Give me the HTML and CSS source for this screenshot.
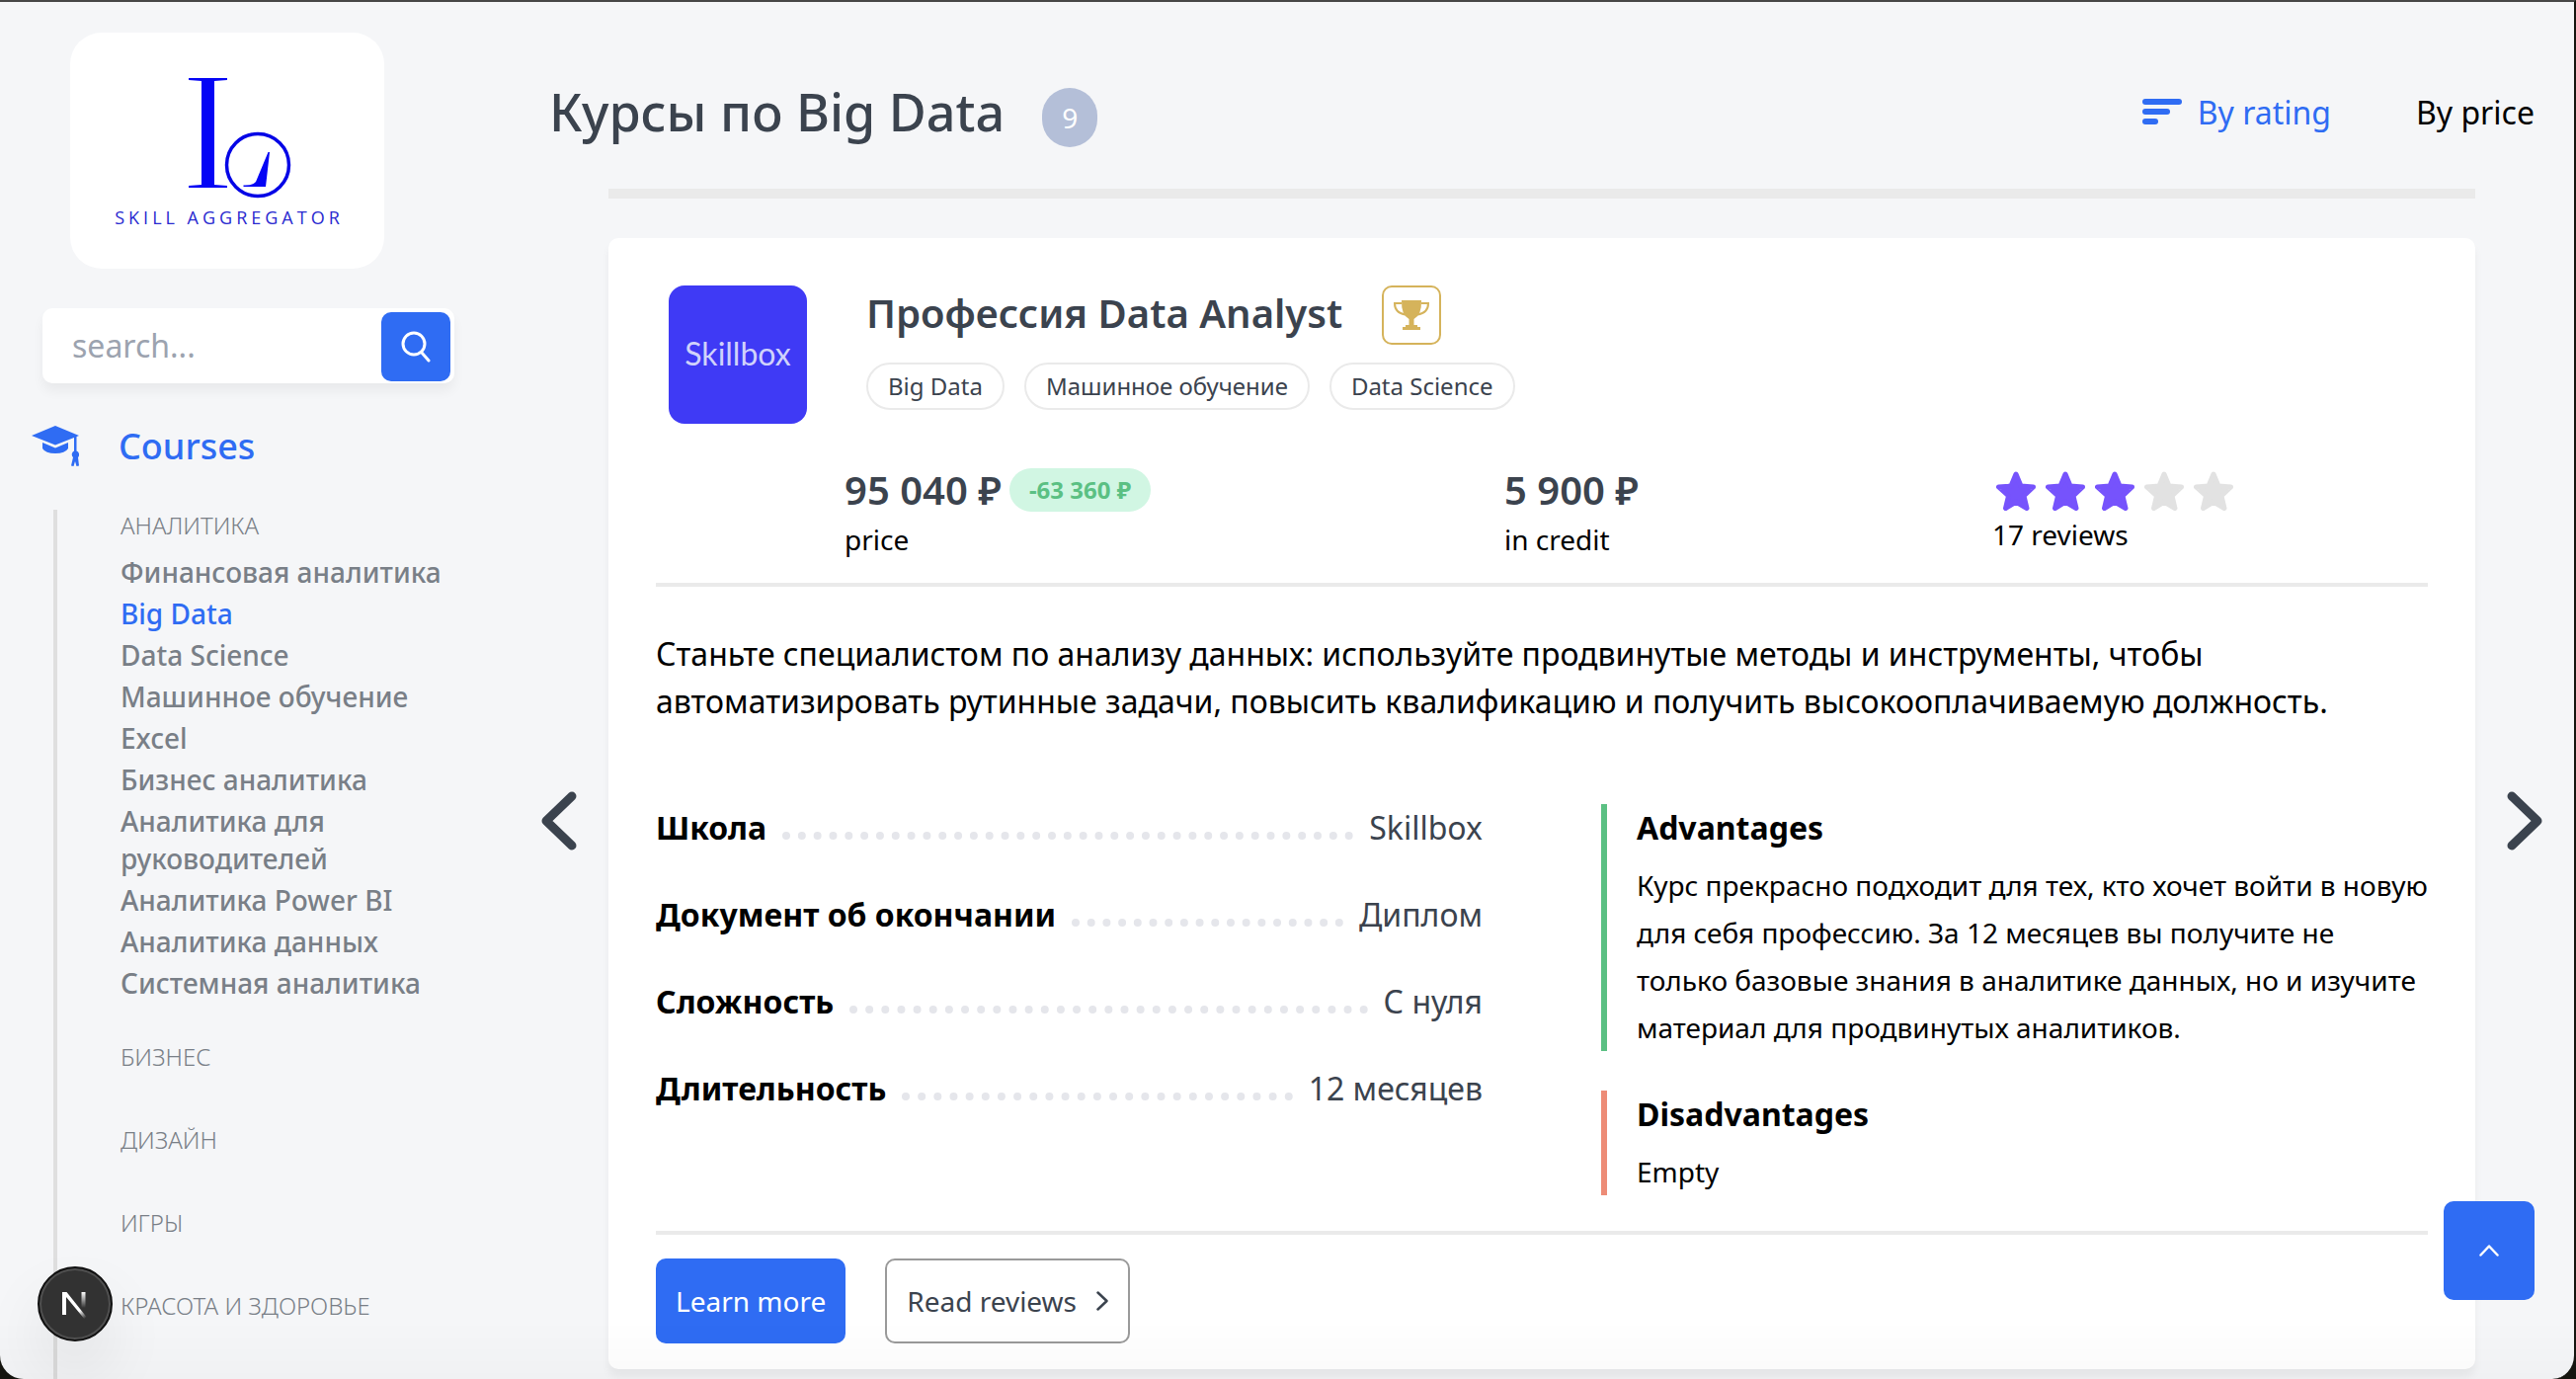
FILE: index.html
```html
<!DOCTYPE html>
<html lang="ru">
<head>
<meta charset="utf-8">
<meta name="viewport" content="width=device-width, initial-scale=1">
<title>Курсы по Big Data</title>
<link rel="stylesheet" href="styles.css">
</head>
<body>
<svg width="0" height="0" class="sprite" aria-hidden="true">
  <symbol id="star" viewBox="0 0 40 40">
    <path stroke-width="5" stroke-linejoin="round" d="M20 3L25 15L37.500 16L28 25L31 37.500L20 31L9.500 37.500L12.500 25L2.500 16L15 15Z"/>
  </symbol>
</svg>
<div class="layout">
  <aside class="sidebar">
    <a class="brand" href="#" aria-label="Skill Aggregator">
      <svg class="brand-mark" width="104" height="122" viewBox="0 0 104 122" aria-hidden="true">
        <path fill="#0505f5" d="M0 0H39V2L26 3V108L39 109V111H0V109L13 108V3L0 2Z"/>
        <circle cx="70" cy="88" r="31.500" fill="none" stroke="#0505e6" stroke-width="3.500"/>
        <path fill="#0505f5" d="M80.500 75H82L78 110H55.500V108.500Q65 109 68 105Z"/>
      </svg>
      <span class="brand-name">SKILL AGGREGATOR</span>
    </a>
    <form class="search">
      <input class="search-input" type="text" placeholder="search..." aria-label="search">
      <button class="search-button" type="button" aria-label="Find">
        <svg width="32" height="32" viewBox="0 0 32 32" fill="none" stroke="#fff" stroke-width="3" stroke-linecap="round" aria-hidden="true"><circle cx="14" cy="13" r="11"/><path d="M22 22l7 8"/></svg>
      </button>
    </form>
    <nav class="menu">
      <a class="menu-head" href="#">
        <svg width="48" height="42" viewBox="0 0 48 42" fill="#2f6cf3" aria-hidden="true">
          <path d="M24 0L48 10L24 19.500L0 10Z"/>
          <path d="M11 17L24 22.500L37 17V23Q34 28 24 28Q14 28 11 23Z"/>
          <path d="M43 11H45.500V25.500A4 4 0 0 1 47 32L48 40.500L45.500 41L44 36L42.500 41L40 40.500L42 32A4 4 0 0 1 43 25.500Z"/>
        </svg>
        <span>Courses</span>
      </a>
      <div class="menu-groups">
        <section class="group">
          <a class="group-title" href="#">АНАЛИТИКА</a>
          <ul class="pages">
            <li><a href="#">Финансовая аналитика</a></li>
            <li><a class="current" href="#">Big Data</a></li>
            <li><a href="#">Data Science</a></li>
            <li><a href="#">Машинное обучение</a></li>
            <li><a href="#">Excel</a></li>
            <li><a href="#">Бизнес аналитика</a></li>
            <li><a href="#">Аналитика для руководителей</a></li>
            <li><a href="#">Аналитика Power BI</a></li>
            <li><a href="#">Аналитика данных</a></li>
            <li><a href="#">Системная аналитика</a></li>
          </ul>
        </section>
        <section class="group"><a class="group-title" href="#">БИЗНЕС</a></section>
        <section class="group"><a class="group-title" href="#">ДИЗАЙН</a></section>
        <section class="group"><a class="group-title" href="#">ИГРЫ</a></section>
        <section class="group"><a class="group-title" href="#">КРАСОТА И ЗДОРОВЬЕ</a></section>
      </div>
    </nav>
  </aside>

  <main class="main">
    <header class="top">
      <h1 class="title">Курсы по Big Data</h1>
      <span class="count">9</span>
      <div class="sort">
        <button class="sort-option active" type="button">
          <svg width="40" height="26" viewBox="0 0 40 26" fill="currentColor" aria-hidden="true"><rect width="40" height="6" rx="3"/><rect y="10" width="28" height="6" rx="3"/><rect y="20" width="16" height="6" rx="3"/></svg>
          By rating
        </button>
        <button class="sort-option" type="button">By price</button>
      </div>
    </header>

    <div class="carousel">
      <button class="arrow" type="button" aria-label="Previous">
        <svg width="36" height="60" viewBox="0 0 36 60" fill="none" stroke="#3b434e" stroke-width="9" stroke-linecap="round" stroke-linejoin="round" aria-hidden="true"><path d="M31 5L5 30L31 55"/></svg>
      </button>
      <div class="slide">
        <div class="bar"></div>
        <article class="card">
          <div class="head">
            <div class="school">Skillbox</div>
            <div class="head-text">
              <div class="name-row">
                <h2 class="name">Профессия Data Analyst</h2>
                <span class="award">
                  <svg width="36" height="30" viewBox="0 0 36 30" fill="#d5b35b" aria-hidden="true">
                    <path d="M8 0H28Q28.500 15 20.500 19V25H24V27H27V30H9V27H12V25H15.500V19Q7.500 15 8 0Z"/>
                    <path fill="none" stroke="#d5b35b" stroke-width="2" d="M8 3H1Q1 13 12 14.500M28 3H35Q35 13 24 14.500"/>
                  </svg>
                </span>
              </div>
              <ul class="tags"><li>Big Data</li><li>Машинное обучение</li><li>Data Science</li></ul>
            </div>
          </div>
          <div class="stats">
            <div class="stat">
              <div class="amount">95 040 ₽ <span class="discount">-63 360 ₽</span></div>
              <div class="caption">price</div>
            </div>
            <div class="stat">
              <div class="amount">5 900 ₽</div>
              <div class="caption">in credit</div>
            </div>
            <div class="rating">
              <div class="stars" role="img" aria-label="3 / 5">
                <svg class="star on"><use href="#star"/></svg>
                <svg class="star on"><use href="#star"/></svg>
                <svg class="star on"><use href="#star"/></svg>
                <svg class="star"><use href="#star"/></svg>
                <svg class="star"><use href="#star"/></svg>
              </div>
              <a class="reviews" href="#">17 reviews</a>
            </div>
          </div>
          <hr class="rule">
          <p class="description">Станьте специалистом по анализу данных: используйте продвинутые методы и инструменты, чтобы автоматизировать рутинные задачи, повысить квалификацию и получить высокооплачиваемую должность.</p>
          <div class="details">
            <dl class="specs">
              <div class="spec"><dt>Школа</dt><dd>Skillbox</dd></div>
              <div class="spec"><dt>Документ об окончании</dt><dd>Диплом</dd></div>
              <div class="spec"><dt>Сложность</dt><dd>С нуля</dd></div>
              <div class="spec"><dt>Длительность</dt><dd>12 месяцев</dd></div>
            </dl>
            <div class="opinions">
              <section class="opinion plus">
                <h3>Advantages</h3>
                <p>Курс прекрасно подходит для тех, кто хочет войти в новую для себя профессию. За 12 месяцев вы получите не только базовые знания в аналитике данных, но и изучите материал для продвинутых аналитиков.</p>
              </section>
              <section class="opinion minus">
                <h3>Disadvantages</h3>
                <p>Empty</p>
              </section>
            </div>
          </div>
          <hr class="rule">
          <div class="actions">
            <button class="button primary" type="button">Learn more</button>
            <button class="button ghost" type="button">Read reviews
              <svg width="12" height="20" viewBox="0 0 12 20" fill="none" stroke="#3b434e" stroke-width="2.500" stroke-linecap="round" stroke-linejoin="round" aria-hidden="true"><path d="M1.500 1.500L10.500 10L1.500 18.500"/></svg>
            </button>
          </div>
        </article>
      </div>
      <button class="arrow" type="button" aria-label="Next">
        <svg width="36" height="60" viewBox="0 0 36 60" fill="none" stroke="#3b434e" stroke-width="9" stroke-linecap="round" stroke-linejoin="round" aria-hidden="true"><path d="M5 5L31 30L5 55"/></svg>
      </button>
    </div>
  </main>
</div>

<div class="shade"></div>
<button class="dev-badge" type="button" aria-label="Next.js">
  <svg width="28" height="32" viewBox="0 0 28 32" aria-hidden="true">
    <defs>
      <linearGradient id="fade-a" x1="12" y1="16" x2="25" y2="30" gradientUnits="userSpaceOnUse"><stop offset=".5" stop-color="#fff"/><stop offset="1" stop-color="#fff" stop-opacity="0"/></linearGradient>
      <linearGradient id="fade-b" x1="0" y1="4" x2="0" y2="20" gradientUnits="userSpaceOnUse"><stop offset="0" stop-color="#fff"/><stop offset="1" stop-color="#fff" stop-opacity="0"/></linearGradient>
    </defs>
    <path fill="url(#fade-a)" d="M1 27V4H5.500L27 31L24.500 32.500L5 9V27Z"/>
    <path fill="url(#fade-b)" d="M20.500 4H24.500V20H20.500Z"/>
  </svg>
</button>
<button class="to-top" type="button" aria-label="Up">
  <svg width="20" height="12" viewBox="0 0 20 12" fill="none" stroke="#fff" stroke-width="2.500" stroke-linecap="round" stroke-linejoin="round" aria-hidden="true"><path d="M1.500 10.500L10 1.500L18.500 10.500"/></svg>
</button>
</body>
</html>
```
FILE: styles.css
```css
* { box-sizing: border-box; }

html {
  height: 100%;
  overflow: hidden;
  background: #15150f;
}

body {
  margin: 0;
  height: 100%;
  overflow: hidden;
  border-top: 2px solid #474747;
  border-right: 2px solid #15150f;
  border-radius: 0 0 24px 24px;
  background: #f5f6f8;
  color: #000;
  font-family: "Noto Sans", sans-serif;
  font-size: 28px;
}

h1, h2, h3, p, ul, dl, dd { margin: 0; padding: 0; }
ul { list-style: none; }
a { color: inherit; text-decoration: none; }
svg { display: block; flex: none; }
button {
  padding: 0;
  border: 0;
  background: none;
  color: inherit;
  font: inherit;
}

.layout {
  display: grid;
  grid-template-columns: 460px minmax(0, 1fr);
  gap: 88px;
  padding-right: 32px;
}

/* Sidebar */
.sidebar { padding-top: 31px; }

.brand {
  display: flex;
  flex-direction: column;
  align-items: center;
  width: 318px;
  height: 239px;
  margin-left: 71px;
  padding-top: 46px;
  border-radius: 32px;
  background: #fff;
}
.brand-mark { margin-left: 26px; }
.brand-name {
  margin-top: 7px;
  padding-left: 4px;
  color: #2a2ad0;
  font-family: "Open Sans", sans-serif;
  font-size: 18px;
  line-height: 24px;
  letter-spacing: 4px;
  white-space: nowrap;
}

.search {
  display: flex;
  align-items: center;
  margin: 40px 0 0 43px;
  padding: 4px 4px 2px;
  border-radius: 10px;
  background: #fff;
  box-shadow: 0 8px 12px rgba(0, 0, 0, .05);
}
.search-input {
  flex: 1;
  min-width: 0;
  height: 70px;
  padding: 0 26px 4px;
  border: 0;
  background: none;
  font: inherit;
  font-size: 32px;
}
.search-input::placeholder { color: #9ca3af; }
.search-button {
  display: grid;
  place-items: center;
  width: 70px;
  height: 70px;
  border-radius: 10px;
  background: #2f6cf3;
}

.menu { margin-top: 40px; }
.menu-head {
  display: flex;
  align-items: center;
  gap: 40px;
  margin-left: 32px;
  color: #2f6cf3;
  font-size: 36px;
  font-weight: 500;
  line-height: 48px;
}
.menu-groups {
  display: flex;
  flex-direction: column;
  gap: 40px;
  margin: 40px 0 0 54px;
  padding: 0 0 60px 64px;
  border-left: 4px solid #dfdfdf;
}
.group-title {
  display: block;
  margin-bottom: 12px;
  color: #797f87;
  font-size: 24px;
  font-weight: 300;
  line-height: 32px;
  white-space: nowrap;
}
.pages {
  display: flex;
  flex-direction: column;
  gap: 4px;
  color: #797f87;
  font-weight: 500;
  line-height: 38px;
}
.current { color: #2f6cf3; }

/* Page header */
.top {
  display: flex;
  align-items: center;
  padding: 75px 8px 0;
}
.title {
  padding-bottom: 4px;
  color: #3b434e;
  font-size: 52px;
  font-weight: 500;
  line-height: 72px;
}
.count {
  width: 56px;
  margin: 8px 0 0 38px;
  border-radius: 30px;
  background: #b4bfd8;
  color: #fff;
  line-height: 60px;
  text-align: center;
}
.sort {
  display: flex;
  gap: 86px;
  margin-left: auto;
  padding-bottom: 4px;
  font-size: 32px;
}
.sort-option {
  display: flex;
  align-items: center;
  gap: 16px;
}
.active { color: #2f6cf3; }

/* Course carousel */
.carousel {
  display: flex;
  align-items: center;
  gap: 32px;
  margin-top: 38px;
}
.arrow { margin-top: 84px; }
.slide {
  flex: 1;
  min-width: 0;
}
.bar {
  height: 10px;
  background: #eaeaea;
}
.card {
  display: flow-root;
  margin-top: 40px;
  padding: 48px 48px 26px;
  border-radius: 10px;
  background: #fff;
  box-shadow: 0 8px 8px rgba(0, 0, 0, .05);
}
.head {
  display: flex;
  gap: 60px;
  padding-left: 13px;
}
.school {
  display: grid;
  place-items: center;
  width: 140px;
  height: 140px;
  padding-bottom: 4px;
  border-radius: 16px;
  background: #3f3af5;
  color: #d0d2fb;
  font-family: Lato, sans-serif;
  font-size: 32px;
}
.name-row {
  display: flex;
  align-items: center;
  gap: 40px;
  height: 60px;
}
.name {
  padding-bottom: 4px;
  color: #3b434e;
  font-size: 40px;
  font-weight: 600;
  line-height: 54px;
}
.award {
  display: grid;
  place-items: center;
  width: 60px;
  height: 60px;
  border: 2px solid #d5b35b;
  border-radius: 10px;
}
.tags {
  display: flex;
  gap: 20px;
  margin-top: 18px;
}
.tags li {
  padding: 0 20px;
  border: 2px solid #eaeaea;
  border-radius: 24px;
  color: #3b434e;
  font-size: 24px;
  line-height: 44px;
}
.stats {
  display: grid;
  grid-template-columns: 668px 494px 1fr;
  margin: 40px 0 21px;
  padding-left: 191px;
}
.amount {
  display: flex;
  align-items: center;
  gap: 8px;
  color: #3b434e;
  font-size: 40px;
  font-weight: 600;
  line-height: 54px;
}
.discount {
  padding: 0 20px;
  border-radius: 22px;
  background: #d1f6e3;
  color: #5bc083;
  font-size: 24px;
  font-weight: 700;
  line-height: 44px;
}
.caption { line-height: 46px; }
.rating { padding-top: 8px; }
.stars {
  display: flex;
  gap: 10px;
  padding-left: 4px;
}
.star {
  width: 40px;
  height: 40px;
  fill: #e2e2e2;
  stroke: #e2e2e2;
}
.on {
  fill: #7653fc;
  stroke: #7653fc;
}
.reviews {
  display: block;
  margin-top: 4px;
  line-height: 40px;
}
.rule {
  height: 4px;
  margin: 0;
  border: 0;
  background: #eaeaea;
}
.description {
  padding: 44px 0 80px;
  font-size: 32px;
  line-height: 48px;
}
.details {
  display: grid;
  grid-template-columns: 1fr 1fr;
  gap: 120px;
  padding-bottom: 36px;
}
.specs, .opinions {
  display: flex;
  flex-direction: column;
  gap: 40px;
}
.spec {
  display: flex;
  gap: 16px;
  font-size: 32px;
  line-height: 48px;
}
.spec::before {
  content: "";
  order: 1;
  flex: 1;
  height: 28px;
  border-bottom: 8px dotted #e5e6eb;
}
.spec dt { font-weight: 700; }
.spec dd {
  order: 2;
  color: #3b434e;
}
.opinion {
  padding-left: 30px;
  border-left: 6px solid;
  line-height: 48px;
}
.opinion h3 {
  margin-bottom: 10px;
  font-size: 32px;
  line-height: 48px;
}
.plus { border-color: #5bc083; }
.minus { border-color: #ed8c77; }
.actions {
  display: flex;
  gap: 40px;
  margin-top: 24px;
}
.button {
  display: flex;
  align-items: center;
  gap: 20px;
  height: 86px;
  padding: 0 20px;
  border-radius: 10px;
}
.primary {
  background: #2f6cf3;
  color: #fff;
}
.ghost {
  border: 2px solid #9a9a9a;
  color: #3b434e;
}

/* Floating controls */
.sprite { position: absolute; }
.shade {
  position: fixed;
  inset: auto 2px 0 0;
  height: 60px;
  border-radius: 0 0 24px 24px;
  background: linear-gradient(rgba(0, 0, 0, 0), rgba(0, 0, 0, .02));
  pointer-events: none;
}
.dev-badge {
  position: fixed;
  left: 38px;
  bottom: 38px;
  display: grid;
  place-items: center;
  width: 76px;
  height: 76px;
  border: 2px solid #111;
  border-radius: 50%;
  background: #323232;
  box-shadow: inset 0 0 0 2px #505050, 0 32px 64px rgba(0, 0, 0, .08);
}
.to-top {
  position: fixed;
  right: 42px;
  bottom: 80px;
  display: grid;
  place-items: center;
  width: 92px;
  height: 100px;
  border-radius: 10px;
  background: #2f6cf3;
}
```
